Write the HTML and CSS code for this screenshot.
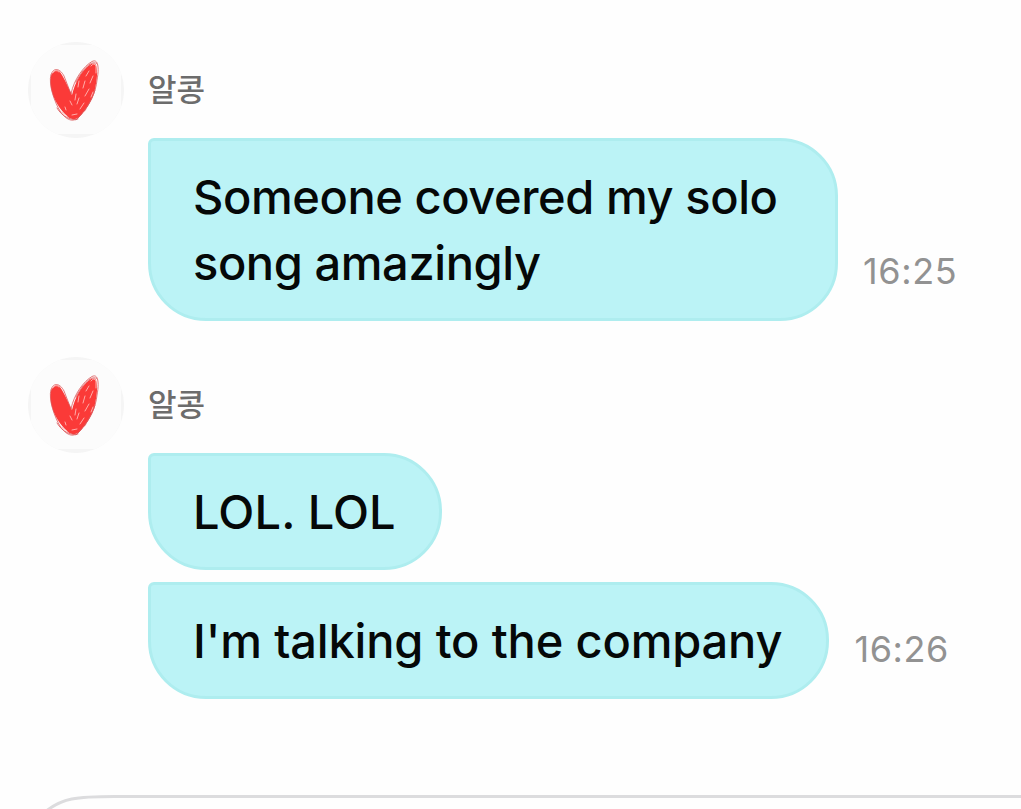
FILE: index.html
```html
<!DOCTYPE html>
<html lang="ko">
<head>
  <meta charset="UTF-8">
  <title>알콩</title>
  <link rel="stylesheet" href="styles.css">
</head>
<body>
  <!-- heart doodle shared by the avatars -->
  <svg class="defs" width="0" height="0">
    <symbol id="heart" viewBox="0 0 96 96">
      <path fill="#fcfcfc" d="M3 3H93V92H3Z"/>
      <path fill="#fb3a38" d="M26 30C22 32 22 38 23 46C25 57 32 68 40 75C44 78 48 78 52 74C58 68 65 57 67 47C69 38 70 29 68 23C66 20 62 22 58 26C52 32 47 41 44 53C40 45 35 33 31 29C29 28 27 28 26 30Z"/>
      <g fill="none" stroke="#dc5558" stroke-width=".8" stroke-linecap="round">
        <path d="M23 33C25 25 32 26 36 34L43 52C46 37 56 24 64 19.500C71 16 71 28 69 38C68 50 61 65 51 75C45 81 38 78 32 69C27 61 20 42 23 33"/>
        <path d="M29 66C34 75 44 79 50 77M48 40C55 26 65 17 69 22M67 48C64 59 56 70 48 78"/>
      </g>
      <g fill="none" stroke="#ffb9b6" stroke-width=".9" stroke-linecap="round">
        <path d="M25 30Q28 27 31 30M63 24Q66 20 68 24L68 31M61 29L58 34M65 34L62 41M57 39L55 46M51 39L50 45M61 47L57 54M48 52L47 58M42 59L44 63M51 56L49 62M34 70L39 74M56 61L52 67M44 73L49 72M58 68L55 71M65 50L63 55M37 65L38 68"/>
      </g>
    </symbol>
  </svg>

  <div class="chat">
    <div class="group">
      <div class="avatar"><svg><use href="#heart"/></svg></div>
      <div class="name">알콩</div>
      <div class="messages">
        <div class="row">
          <div class="bubble wide">Someone covered my solo song amazingly</div>
          <div class="time">16:25</div>
        </div>
      </div>
    </div>

    <div class="group">
      <div class="avatar"><svg><use href="#heart"/></svg></div>
      <div class="name">알콩</div>
      <div class="messages">
        <div class="row">
          <div class="bubble short">LOL. LOL</div>
        </div>
        <div class="row">
          <div class="bubble">I'm talking to the company</div>
          <div class="time">16:26</div>
        </div>
      </div>
    </div>
  </div>
  <!-- only the top edge of the input box is on screen -->
  <svg class="composer" viewBox="0 0 1021 14">
    <path d="M45 17C62 3 76 1.500 115 1.500H1021"/>
  </svg>
</body>
</html>
```
FILE: styles.css
```css
* {
  box-sizing: border-box;
}
body {
  margin: 0;
  height: 809px;
  overflow: hidden;
  background-color: #fefefe;
  color: #050808;
  font-family: Inter, "Noto Sans CJK KR", sans-serif;
}
.defs {
  display: block;
}
.chat {
  display: flex;
  flex-direction: column;
  gap: 36px;
  height: 795px;
  padding: 42px 0 0 28px;
}
.group {
  display: grid;
  grid-template-columns: 96px 1fr;
  grid-template-rows: 96px auto;
  column-gap: 24px;
}
.avatar {
  width: 96px;
  height: 96px;
  border-radius: 50%;
  background-color: #f5f5f5;
  overflow: hidden;
}
.avatar svg {
  display: block;
  width: 96px;
  height: 96px;
}
.name {
  align-self: center;
  padding-bottom: 1px;
  font-size: 31px;
  font-weight: 500;
  line-height: 40px;
  color: #6c6c6c;
}
.messages {
  grid-column: 2;
  display: flex;
  flex-direction: column;
  gap: 12px;
}
.row {
  display: flex;
  align-items: flex-end;
  gap: 25px;
}
.bubble {
  padding: 23px 44px 22px 42px;
  border: 3px solid #aeedef;
  border-radius: 6px 58px 58px 58px;
  background-color: #bbf3f6;
  font-size: 47px;
  font-weight: 500;
  letter-spacing: -0.16px;
  line-height: 66px;
}
.bubble.wide {
  width: 690px;
  letter-spacing: -0.42px;
}
.bubble.short {
  padding-right: 43px;
  letter-spacing: 0.1px;
}
.time {
  padding-bottom: 28px;
  font-size: 36px;
  letter-spacing: 0.6px;
  line-height: 44px;
  color: #929292;
}
.composer {
  display: block;
  width: 1021px;
  height: 14px;
  fill: none;
  stroke: #dcdcde;
  stroke-width: 3;
}
```
